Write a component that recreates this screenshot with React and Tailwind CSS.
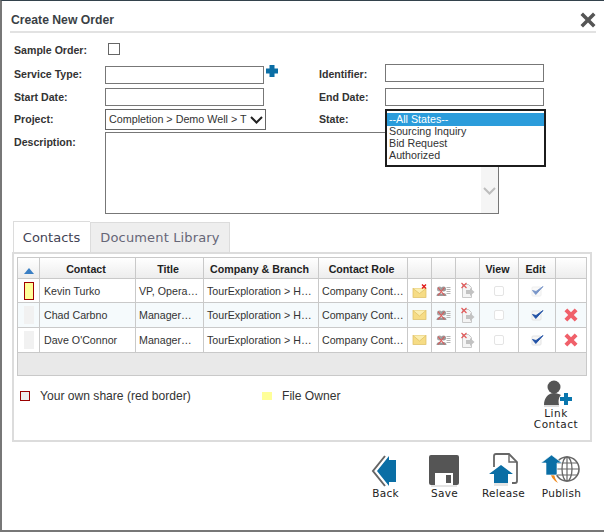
const sans = "font-['Liberation_Sans',Arial,sans-serif]";
const deja = "font-['DejaVu_Sans',Verdana,sans-serif]";

function Label({ children, className = "" }) {
  return <div className={`text-[10.6px] font-bold text-[#333] ${className}`}>{children}</div>;
}
function Field({ className = "" }) {
  return <div className={`h-[18px] w-[159px] border border-[#777] bg-white ${className}`} />;
}
const Cross = () => (
  <svg width="14" height="14" viewBox="0 0 15 15">
    <path d="M.5 3.500 3.500 .5 7.500 4.500 11.500 .5 14.500 3.500 10.500 7.500 14.500 11.500 11.500 14.500 7.500 10.500 3.500 14.500 .5 11.500 4.500 7.500Z" fill="#f0606a" />
  </svg>
);
const Envelope = ({ x }) => (
  <svg width="15" height="14" viewBox="0 0 15 14">
    <rect x="1" y={x ? 4.500 : 2.500} width="13" height="9" fill="#f6dc85" stroke="#dcbc60" strokeWidth=".7" />
    <path d={x ? "M1 4.500 7.500 9.500 14 4.500" : "M1 2.500 7.500 8 14 2.500"} fill="#fbeeb0" stroke="#dcbc60" strokeWidth=".7" />
    {x && <path d="M10 .5 14 4.500M14 .5 10 4.500" stroke="#e01818" strokeWidth="1.400" />}
  </svg>
);
const People = () => (
  <svg width="15" height="12" viewBox="0 0 15 12">
    <circle cx="3.500" cy="4" r="2.500" fill="#a5a5a5" /><circle cx="7.500" cy="4" r="2.500" fill="#999" />
    <path d="M.5 11C.5 7 6.500 7 6.500 11ZM4.500 11C4.500 7 10.500 7 10.500 11Z" fill="#999" />
    <path d="M10.500 2.500h4M10.500 4.500h4M10.500 6.500h4M10.500 8.500h4" stroke="#b5b5b5" strokeWidth="1" />
    <path d="M2 2.500 8.500 10.500M8.500 2.500 2 10.500" stroke="#dd5555" strokeWidth="1.100" />
  </svg>
);
const DocX = () => (
  <svg width="15" height="17" viewBox="0 0 15 17">
    <path d="M2.500 2.500H8.500L11.500 5.500V15.500H2.500Z" fill="#f4f4f4" stroke="#c8c8c8" />
    <path d="M6 8H10V6L14.500 10 10 14V12H6Z" fill="#c2c2c2" />
    <path d="M1.500 1 6.500 6M6.500 1 1.500 6" stroke="#e25a5a" strokeWidth="1.200" />
  </svg>
);
const Check = ({ light }) => (
  <svg width="13" height="12" viewBox="0 0 13 12" opacity={light ? 0.6 : 1}>
    <rect x="1" y="2" width="9" height="9" rx="1" fill="#f6f6f6" stroke="#e4e4e4" />
    <path d="M1.500 5.500 4.800 9.500 12 1.500 5 6.500Z" fill="#2050a5" stroke="#2050a5" strokeWidth=".9" strokeLinejoin="round" />
  </svg>
);
const Box = () => <div className="mx-auto h-[10px] w-[10px] rounded-[2px] border border-[#e4e4e4] bg-white" />;

const heads = [
  ["", "w-[22px]"], ["Contact", "w-[96px]"], ["Title", "w-[68px]"], ["Company & Branch", "w-[115px]"],
  ["Contact Role", "w-[89px]"], ["", "w-[24px]"], ["", "w-[24px]"], ["", "w-[24px]"],
  ["View", "w-[39px]"], ["Edit", "w-[37px]"], ["", "w-[31px]"],
];
const rows = [
  { name: "Kevin Turko", title: "VP, Opera…", own: true, h: "h-[24px]" },
  { name: "Chad Carbno", title: "Manager…", alt: true, del: true, h: "h-[25px]" },
  { name: "Dave O'Connor", title: "Manager…", del: true, h: "h-[25px]", nudge: "pb-[1px]" },
];

function ActionButton({ label, children, shift = "" }) {
  return (
    <div className="flex w-[59px] flex-col items-center">
      <div className="h-[34px] w-[59px]">{children}</div>
      <div className={`text-[10.5px] leading-[13px] tracking-[.3px] text-[#222] ${shift} ${deja}`}>{label}</div>
    </div>
  );
}

export default function App() {
  return (
    <div className={`flex h-[532px] w-[604px] flex-col border-t border-b-2 border-l-2 border-t-[#33424c] border-b-[#777] border-l-[#777] bg-white ${sans}`}>
      <div className="mx-[8px] flex h-[32px] shrink-0 items-start justify-between border-b-2 border-[#e2e2e2] pt-[12px]">
        <div className="pl-[1px] text-[12.2px] leading-[14px] font-bold text-[#3a3f45]">Create New Order</div>
        <svg width="18" height="18" viewBox="0 0 18 18" className="mt-[-2px] mr-[-1px]">
          <path d="M1.500 4 4 1.500 9 6.500 14 1.500 16.500 4 11.500 9 16.500 14 14 16.500 9 11.500 4 16.500 1.500 14 6.500 9Z" fill="#555" />
        </svg>
      </div>

      <div className="relative grid shrink-0 grid-cols-[91px_214px_66px_1fr] pl-[12px]">
        <Label className="h-[33px] pt-[10px]">Sample Order:</Label>
        <div className="pt-[10px] pl-[3px]"><div className="h-[12px] w-[12px] border border-[#666]" /></div>
        <div /><div />

        <Label className="h-[22px] pt-[1px]">Service Type:</Label>
        <div className="relative">
          <Field />
          <svg width="14" height="14" viewBox="0 0 14 14" className="absolute top-[-2px] left-[160px]">
            <path d="M4.500 1H9.500V4.500H13V9.500H9.500V13H4.500V9.500H1V4.500H4.500Z" fill="#0a6ea5" />
          </svg>
        </div>
        <Label className="pt-[1px]">Identifier:</Label>
        <div className="mt-[-2px]"><Field /></div>

        <Label className="h-[21px] pt-[2px]">Start Date:</Label>
        <div><Field /></div>
        <Label className="pt-[2px]">End Date:</Label>
        <div><Field /></div>

        <Label className="h-[23px] pt-[3px]">Project:</Label>
        <div className="flex h-[21px] w-[161px] items-center justify-between border border-[#666] pr-[2px] pl-[3px] text-[10.75px] whitespace-nowrap text-[#333]">
          <span>Completion &gt; Demo Well &gt; T</span>
          <svg width="13" height="8" viewBox="0 0 13 8" className="shrink-0"><path d="M1 1 6.500 6.500 12 1" fill="none" stroke="#222" strokeWidth="2" /></svg>
        </div>
        <Label className="pt-[3px]">State:</Label>
        <div />

        <Label className="pt-[3px]">Description:</Label>
        <div className="col-span-3 flex h-[82px] w-[394px] justify-end border border-[#777]">
          <div className="mt-[34px] flex w-[17px] items-center justify-center bg-[#f5f5f5]">
            <svg width="13" height="8" viewBox="0 0 13 8" className="mt-[2px]"><path d="M1 1 6.500 6.500 12 1" fill="none" stroke="#bdbdbd" strokeWidth="2" /></svg>
          </div>
        </div>

        <div className="absolute top-[76px] left-[383px] h-[58px] w-[161px] border-2 border-[#1c1c1c] bg-white pt-[2px] text-[10.7px] leading-[12px] text-[#333]">
          <div className="h-[13px] bg-[#2b9cdb] pl-[2px] text-white">--All States--</div>
          <div className="mt-[-1px] pl-[2px]">Sourcing Inquiry</div>
          <div className="pl-[2px]">Bid Request</div>
          <div className="pl-[2px]">Authorized</div>
        </div>
      </div>

      <div className={`mt-[7px] flex h-[31px] shrink-0 items-stretch pl-[11px] text-[13px] ${deja}`}>
        <div className="flex w-[77px] items-center justify-center border-t border-l border-[#dcdcdc] bg-white pt-[1px] pr-[1px] text-[#445]">Contacts</div>
        <div className="mt-[1px] flex w-[140px] items-center justify-center border border-b-0 border-[#dcdcdc] bg-[#eeeeee] tracking-[.15px] text-[#667]">Document Library</div>
      </div>

      <div className="mx-[10px] h-[190px] w-[580px] shrink-0 border-2 border-[#dcdcdc] px-[3px] pt-[3px]">
        <table className="w-[569px] table-fixed border-collapse text-[10.67px] text-[#333]">
          <thead>
            <tr className="h-[21px] bg-gradient-to-b from-white to-[#ececec]">
              {heads.map(([h, w], i) => (
                <th key={i} className={`${w} border border-[#c9c9c9] pt-[1px] pr-[3px] font-bold whitespace-nowrap text-[#222]`}>
                  {i === 0 ? <svg width="10" height="6" viewBox="0 0 10 6" className="mx-auto mt-[4px] ml-[6px] block"><path d="M5 0 10 6H0Z" fill="#3a7fc4" /></svg> : h}
                </th>
              ))}
            </tr>
          </thead>
          <tbody>
            {rows.map((r, i) => (
              <tr key={i} className={`${r.h} ${r.alt ? "bg-[#f5fafc]" : "bg-white"}`}>
                <td className="border border-[#c9c9c9]">
                  <div className={`mx-auto h-[18px] w-[10px] ${r.own ? "border border-[#a00000] bg-[#ffff99]" : "bg-[#f1f1f1]"}`} />
                </td>
                <td className={`overflow-hidden border border-[#c9c9c9] pl-[4px] whitespace-nowrap ${r.nudge || ""}`}>{r.name}</td>
                <td className={`overflow-hidden border border-[#c9c9c9] pl-[3px] whitespace-nowrap ${r.nudge || ""}`}>{r.title}</td>
                <td className={`overflow-hidden border border-[#c9c9c9] pl-[3px] whitespace-nowrap ${r.nudge || ""}`}>TourExploration &gt; H…</td>
                <td className={`overflow-hidden border border-[#c9c9c9] pl-[3px] whitespace-nowrap ${r.nudge || ""}`}>Company Cont…</td>
                <td className="border border-[#c9c9c9]"><div className="flex justify-center"><Envelope x={r.own} /></div></td>
                <td className="border border-[#c9c9c9]"><div className="flex justify-center"><People /></div></td>
                <td className="border border-[#c9c9c9]"><div className="flex justify-center"><DocX /></div></td>
                <td className="border border-[#c9c9c9]"><Box /></td>
                <td className="border border-[#c9c9c9]"><div className="flex justify-center"><Check light={r.own} /></div></td>
                <td className="border border-[#c9c9c9]"><div className="flex justify-center">{r.del && <Cross />}</div></td>
              </tr>
            ))}
            <tr className="h-[23px] bg-[#e9e9e9]"><td colSpan={11} className="border border-[#c9c9c9]" /></tr>
          </tbody>
        </table>

        <div className="flex h-[62px] items-start">
          <div className="flex items-center pt-[11px] pl-[3px] text-[12.1px] text-[#333]">
            <div className="mr-[10px] h-[10px] w-[10px] border border-[#990000] bg-[#eeeeee]" />
            <div className="w-[222px]">Your own share (red border)</div>
            <div className="mr-[10px] h-[8px] w-[10px] bg-[#ffff99]" />
            <div>File Owner</div>
          </div>
          <div className="mr-[5px] ml-auto flex w-[52px] flex-col items-center pt-[4px]">
            <svg width="32" height="27" viewBox="0 0 32 27" className="shrink-0">
              <circle cx="14" cy="7" r="6.500" fill="#555" />
              <path d="M4 25C4 18 8 13 14 13C17 13 19 14 21 15C19 17 18 20 19 25Z" fill="#555" />
              <rect x="4" y="25" width="15" height="2" fill="#dddddd" />
              <path d="M24 13H28V17H32V21H28V25H24V21H20V17H24Z" fill="#0a76ad" />
            </svg>
            <div className={`mt-[1px] text-center text-[10.5px] leading-[10.500px] tracking-[.5px] text-[#222] ${deja}`}>Link<br />Contact</div>
          </div>
        </div>
      </div>

      <div className="mt-[11px] flex justify-end pr-[13px]">
        <ActionButton label="Back" shift="ml-[2px]">
          <svg width="59" height="34" viewBox="0 0 59 34">
            <path d="M30 3 18 18 30 33" fill="none" stroke="#666" strokeWidth="2" />
            <path d="M34 3 22 18 34 33V29H41V7H34Z" fill="#0a6ea5" />
          </svg>
        </ActionButton>
        <ActionButton label="Save" shift="ml-[2px]">
          <svg width="59" height="34" viewBox="0 0 59 34">
            <path d="M17 2H43Q45 2 45 4V30Q45 32 43 32H39V20H21V32H17Q15 32 15 30V4Q15 2 17 2Z" fill="#555" />
            <rect x="32" y="22" width="5" height="8" fill="#555" />
            <rect x="17" y="32" width="26" height="2" fill="#e4e4e4" />
          </svg>
        </ActionButton>
        <ActionButton label="Release" shift="ml-[2px]">
          <svg width="59" height="34" viewBox="0 0 59 34">
            <path d="M21 14V3Q21 1 23 1H36L44 9V28Q44 30 42 30H39" fill="none" stroke="#666" strokeWidth="1.800" />
            <path d="M36 1V9H44" fill="none" stroke="#666" strokeWidth="1.400" />
            <path d="M28 12 40 21H35V30H21V21H16Z" fill="#0a6ea5" />
            <rect x="21" y="30" width="14" height="3" fill="#e4e4e4" />
          </svg>
        </ActionButton>
        <ActionButton label="Publish">
          <svg width="59" height="34" viewBox="0 0 59 34">
            <circle cx="35" cy="16" r="12" fill="none" stroke="#666" strokeWidth="1.600" />
            <ellipse cx="35" cy="16" rx="5" ry="12" fill="none" stroke="#666" strokeWidth="1.300" />
            <path d="M23 16H47M25 10H45M25 22H45M35 4V28" stroke="#666" strokeWidth="1.200" />
            <path d="M18 19Q19 26 26 30Q22 25 22 19Z" fill="#f08a1d" />
            <path d="M19.500 2 30 10H25V22H14V10H9Z" fill="#0a6ea5" stroke="white" strokeWidth=".6" />
          </svg>
        </ActionButton>
      </div>
    </div>
  );
}
